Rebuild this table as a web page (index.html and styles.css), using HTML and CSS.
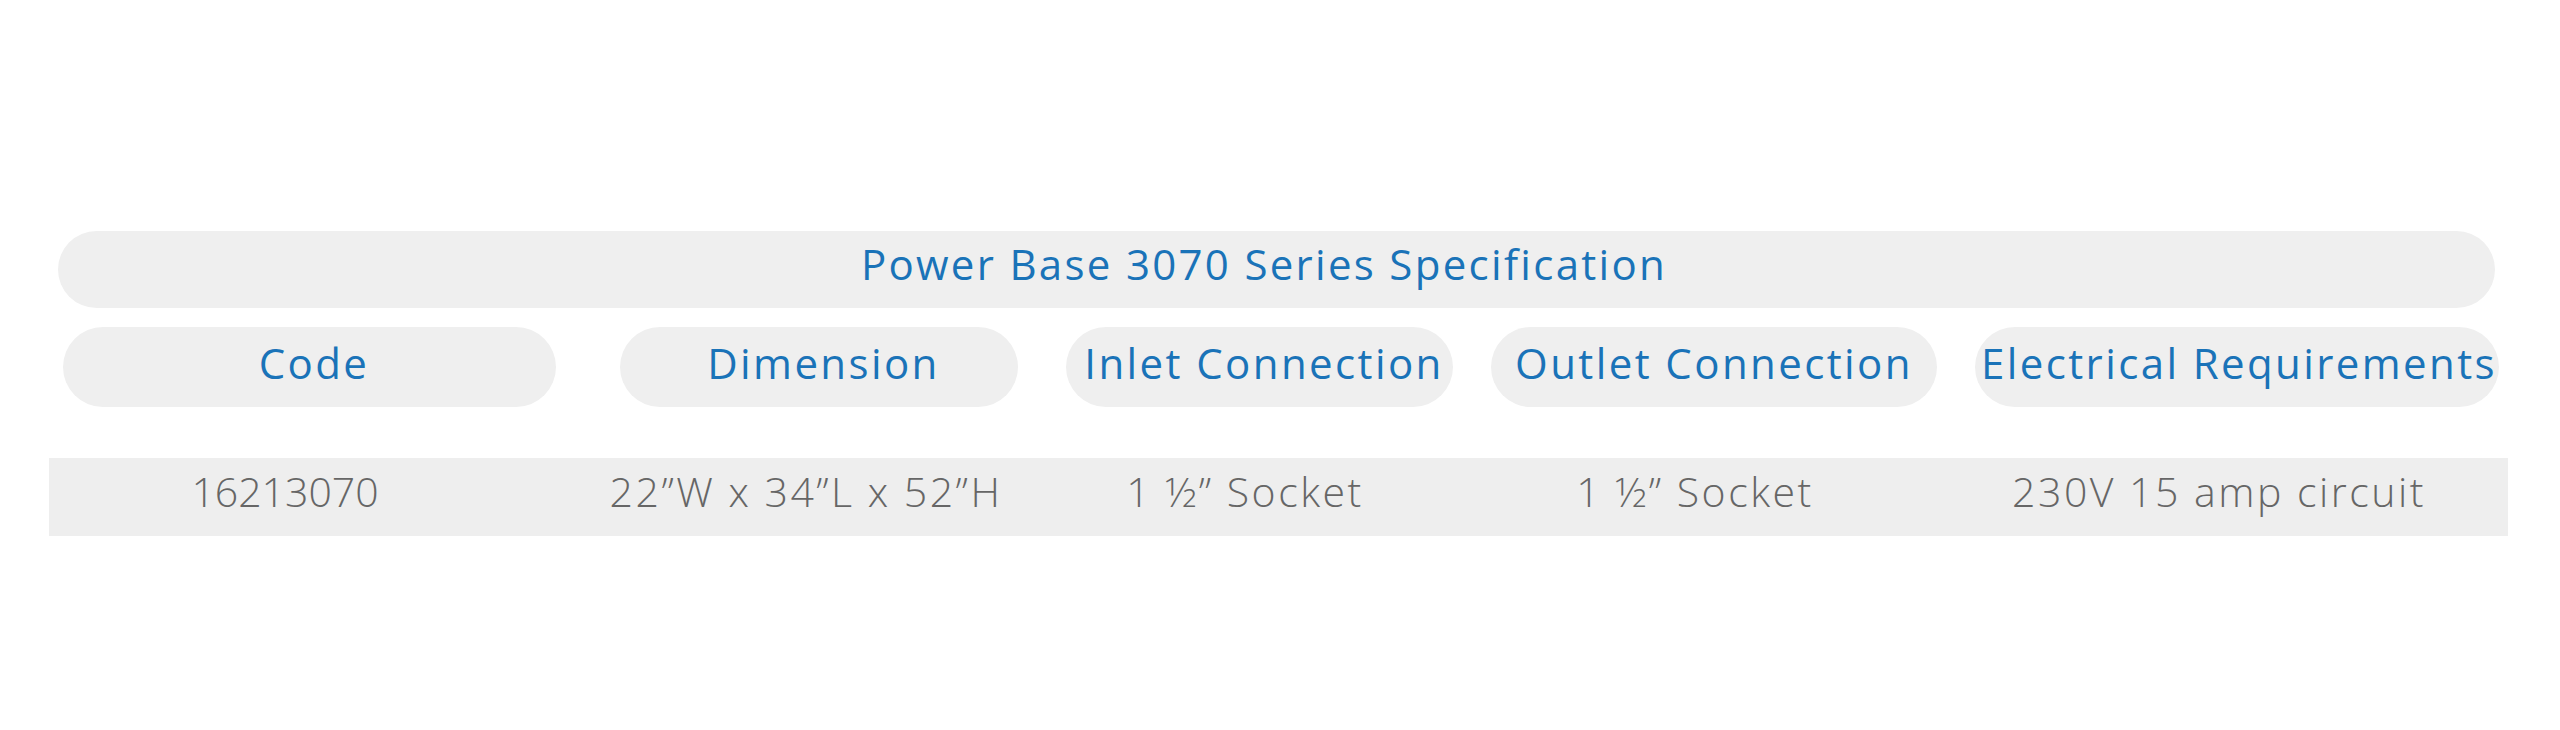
FILE: index.html
```html
<!DOCTYPE html>
<html lang="en">
<head>
<meta charset="utf-8">
<title>Power Base 3070 Series Specification</title>
<link rel="stylesheet" href="styles.css">
</head>
<body>
<main class="spec">
  <div class="spec-title">Power Base 3070 Series Specification</div>
  <div class="spec-head">
    <div class="pill col-code">Code</div>
    <div class="pill col-dim">Dimension</div>
    <div class="pill col-inlet">Inlet Connection</div>
    <div class="pill col-outlet">Outlet Connection</div>
    <div class="pill col-elec">Electrical Requirements</div>
  </div>
  <div class="spec-row">
    <div class="cell cell-num">16213070</div>
    <div class="cell">22”W x 34”L x 52”H</div>
    <div class="cell">1 ½” Socket</div>
    <div class="cell">1 ½” Socket</div>
    <div class="cell">230V 15 amp circuit</div>
  </div>
</main>
</body>
</html>
```

FILE: styles.css
```css
html, body {
  margin: 0;
  padding: 0;
  background: #ffffff;
}

body {
  width: 2560px;
  height: 730px;
  overflow: hidden;
  font-family: "Open Sans", "Liberation Sans", sans-serif;
}

.spec {
  display: flex;
  flex-direction: column;
  padding-top: 231px;
}

.spec-title {
  margin-left: 58px;
  width: 2437px;
  height: 77px;
  box-sizing: border-box;
  padding-right: 25px;
  padding-bottom: 12px;
  border-radius: 39px;
  background: #efefef;
  color: #1a73b8;
  font-size: 42px;
  letter-spacing: 2.3px;
  display: flex;
  align-items: center;
  justify-content: center;
  white-space: nowrap;
}

.spec-head {
  display: flex;
  margin-top: 19px;
  margin-left: 63px;
  height: 80px;
}

.pill {
  height: 80px;
  box-sizing: border-box;
  padding-left: 9px;
  padding-bottom: 10px;
  border-radius: 40px;
  background: #efefef;
  color: #1a73b8;
  font-size: 42px;
  letter-spacing: 2.4px;
  display: flex;
  align-items: center;
  justify-content: center;
  white-space: nowrap;
}

.col-code { width: 493px; }
.col-dim { width: 398px; margin-left: 64px; }
.col-inlet { width: 387px; margin-left: 48px; }
.col-outlet { width: 446px; margin-left: 38px; padding-left: 0; }
.col-elec { width: 524px; margin-left: 38px; padding-left: 4px; }

.spec-row {
  display: grid;
  grid-template-columns: 472px 570px 308px 592px 456px;
  margin-top: 51px;
  margin-left: 49px;
  width: 2459px;
  height: 78px;
  background: #eeeeee;
}

.cell {
  display: flex;
  align-items: center;
  justify-content: center;
  box-sizing: border-box;
  padding-bottom: 12px;
  white-space: nowrap;
  color: #666666;
  font-size: 41px;
  font-weight: 300;
  letter-spacing: 2.5px;
}

.cell-num {
  letter-spacing: 0;
}
```
